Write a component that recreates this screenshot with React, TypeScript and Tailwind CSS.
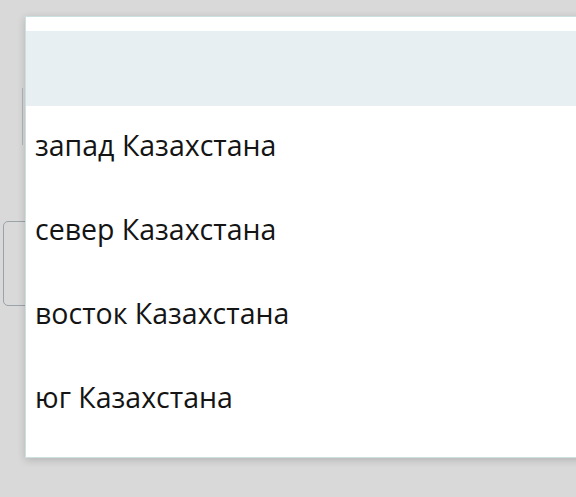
export default function App() {
    const options = [
        "запад Казахстана",
        "север Казахстана",
        "восток Казахстана",
        "юг Казахстана",
    ];

    return (
        <div
            className="relative h-[497px] w-[576px] overflow-hidden bg-[#d9d9d9]"
            style={{ fontFamily: '"Open Sans", "Noto Sans", sans-serif' }}
        >
            {/* form fields behind the dropdown */}
            <div className="ml-[22px] mt-[88px] h-[57px] w-[600px] border-l border-[#b3b6b7]" />
            <div className="ml-[3px] mt-[76px] h-[85px] w-[600px] rounded-[5px] border border-[#9aa3a8]" />

            {/* dropdown */}
            <div className="absolute left-[25px] top-[16px] w-[580px] border border-[#cde0e0] bg-white pt-[14px] pb-[15px] shadow-[0_2px_8px_rgba(0,0,0,0.18)]">
                <div className="h-[75px] bg-[#e8eff2]" />
                <ul>
                    {options.map((o) => (
                        <li
                            key={o}
                            className="flex h-[84px] items-center pb-[6px] pl-[9px] text-[28.5px] text-[#141414]"
                        >
                            {o}
                        </li>
                    ))}
                </ul>
            </div>
        </div>
    );
}
